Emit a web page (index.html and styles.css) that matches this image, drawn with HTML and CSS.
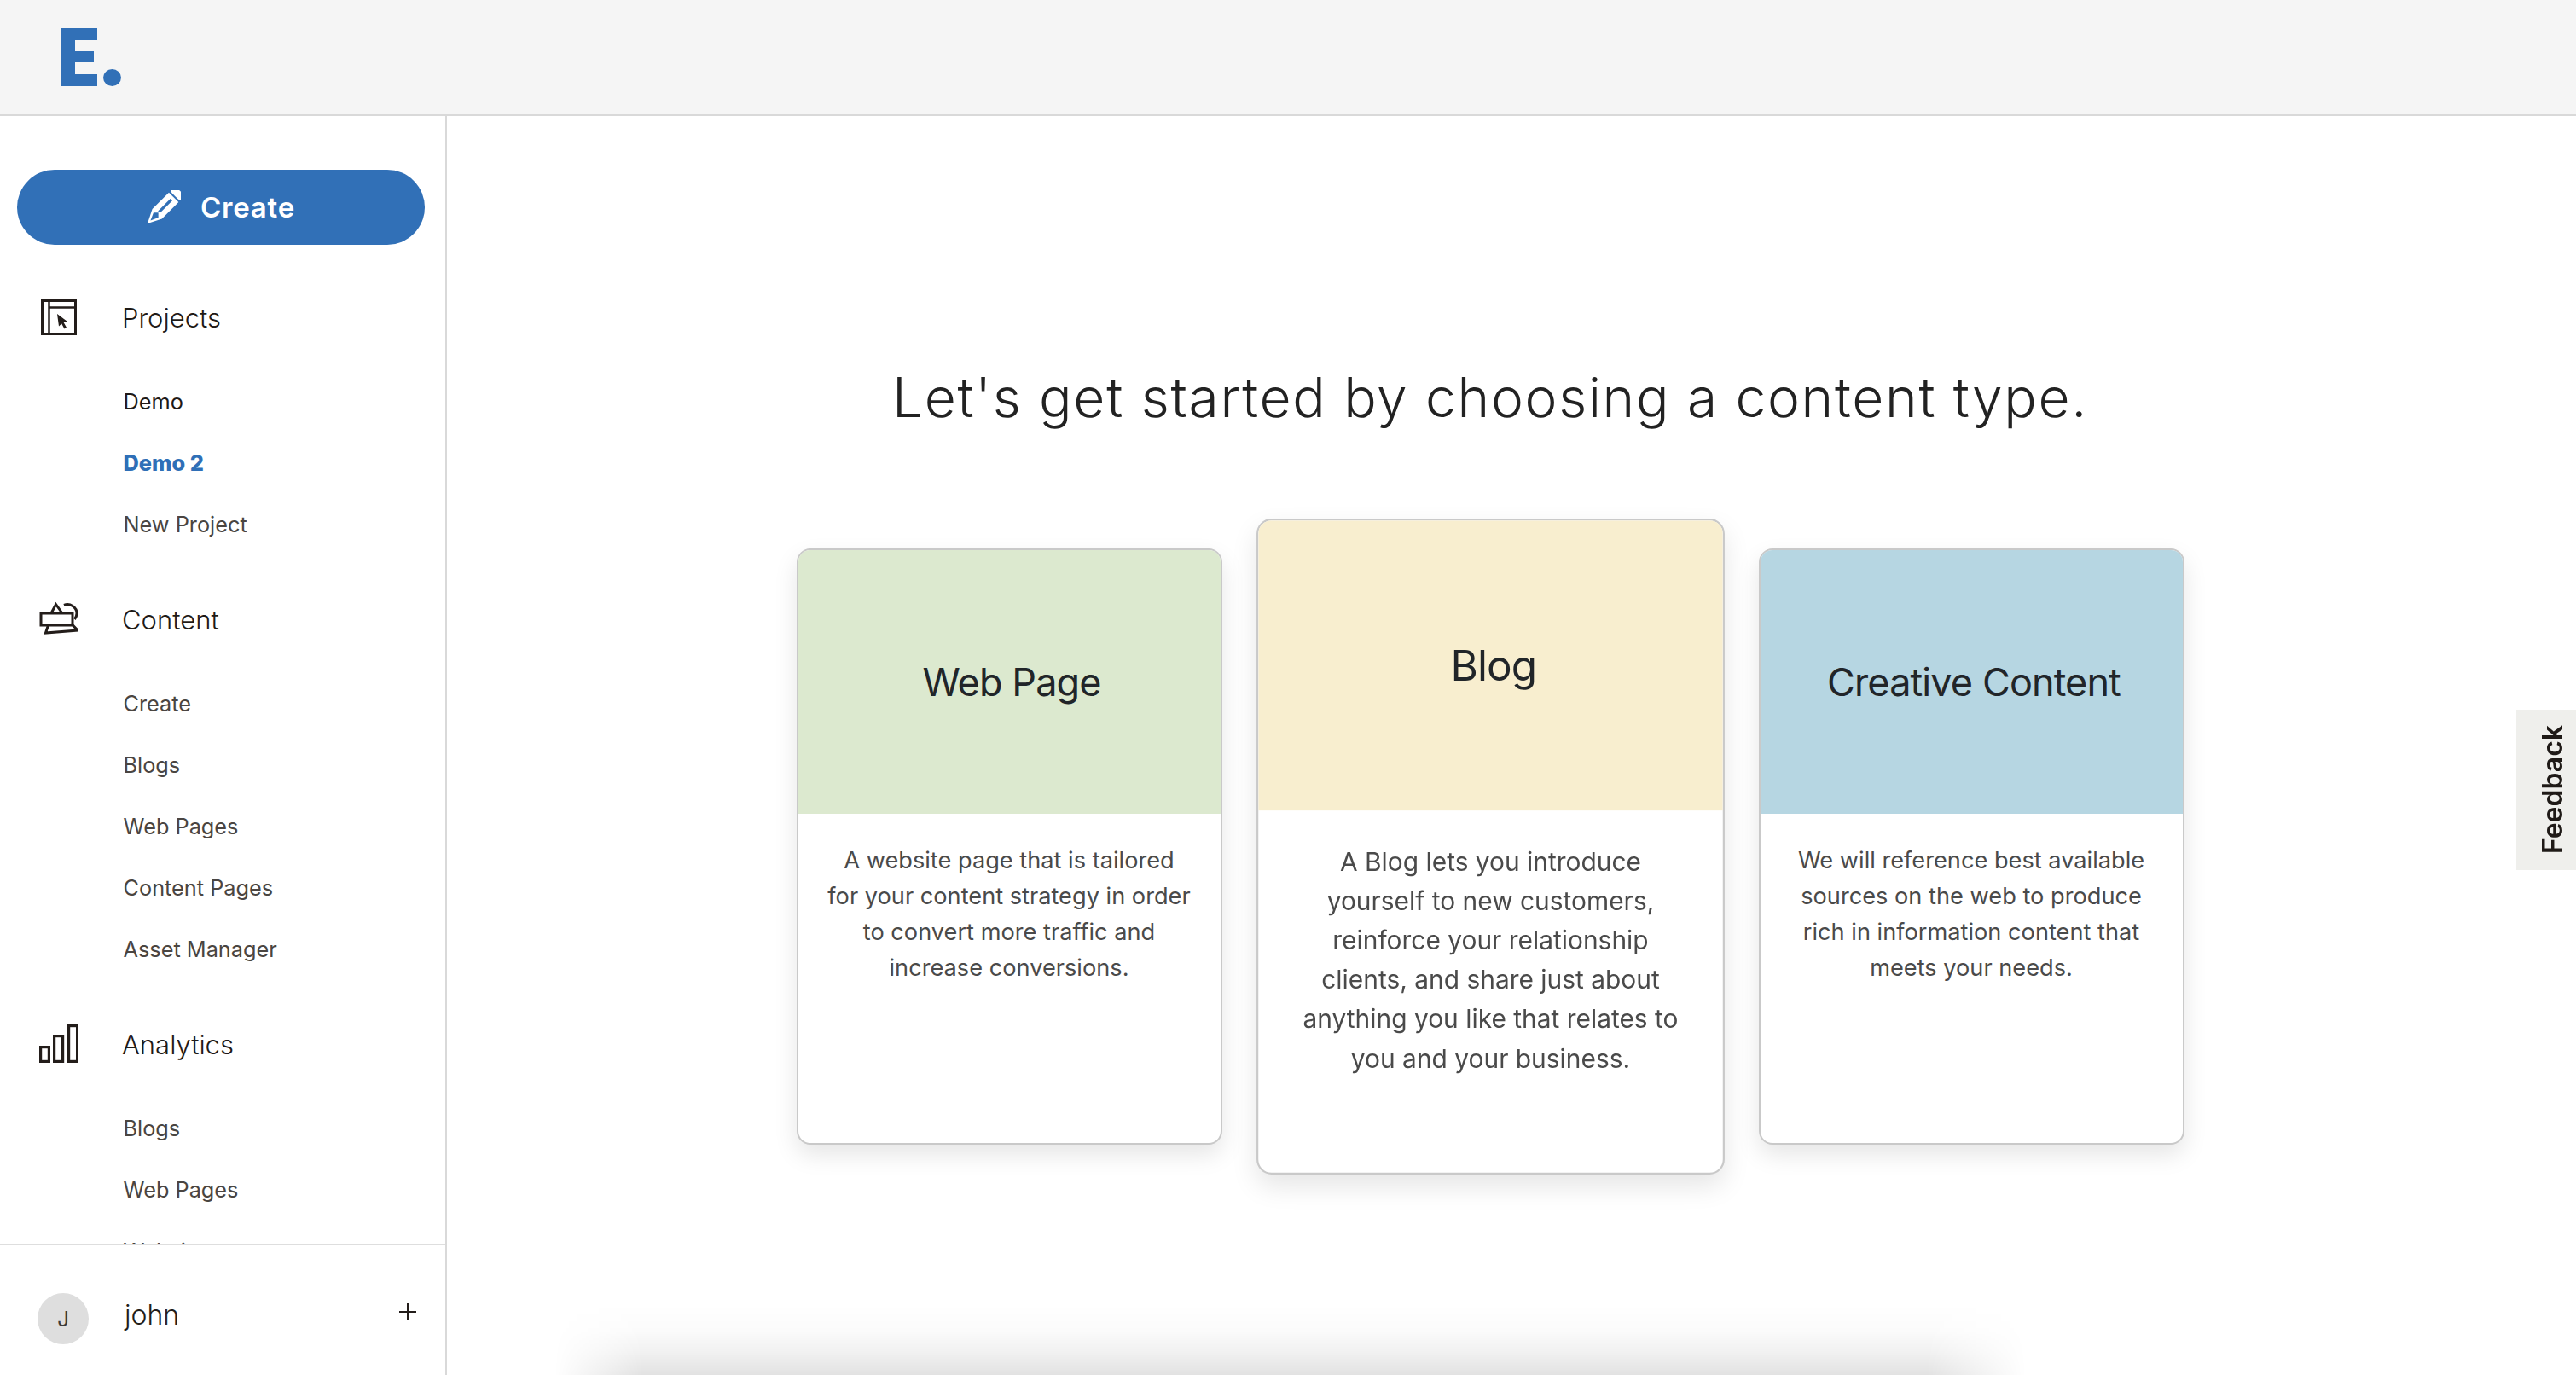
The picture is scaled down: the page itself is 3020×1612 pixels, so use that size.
FILE: index.html
```html
<!DOCTYPE html>
<html>
<head>
  <title>Choose a content type</title>
  <link rel="stylesheet" href="styles.css">
</head>
<body>
  <header class="topbar">
    <div class="logo"><span class="logo-e"></span><span class="logo-dot"></span></div>
  </header>
  <div class="layout">
    <aside class="sidebar">
      <nav class="side-nav">
        <a class="create-btn" href="#">
          <svg class="pencil" viewBox="0 0 40 40" width="40" height="40">
            <g transform="translate(20 20) rotate(45)" fill="#fff">
              <rect x="-8" y="-27" width="16" height="8.5" rx="3.5"/>
              <path d="M-8 -16.5H8V11L0 27L-8 11Z"/>
              <path d="M-1.6 -12.5H1.6V8H-1.6Z" fill="#3170b7"/>
              <path d="M-4 13L0 9L4 13L0 22Z" fill="#3170b7"/>
            </g>
          </svg>
          <span>Create</span>
        </a>

        <div class="nav-head">
          <svg class="nav-icon" viewBox="0 0 46 46" width="46" height="46" fill="none" stroke="#231d1a">
            <rect x="3.5" y="3.5" width="39" height="39" stroke-width="3"/>
            <path d="M11.5 3.5V42.5M11.5 11.5H42.5" stroke-width="2.5"/>
            <path d="M21 19L33 28L28.6 29L32 35L29.5 36.5L26.2 30.5L23 33.5Z" fill="#231d1a" stroke="none"/>
          </svg>
          <span>Projects</span>
        </div>
        <ul class="sub-list">
          <li class="dark"><a href="#">Demo</a></li>
          <li class="active"><a href="#">Demo 2</a></li>
          <li><a href="#">New Project</a></li>
        </ul>

        <div class="nav-head">
          <svg class="nav-icon" viewBox="0 0 46 46" width="46" height="46" fill="none" stroke="#231d1a" stroke-width="3">
            <path d="M14 16L19.5 5.5L27 16"/>
            <path d="M29 6.5C36 3.5 44 9 44 16C44 19 43 21 41.5 23"/>
            <rect x="2" y="16" width="37" height="14"/>
            <path d="M10.5 30L7.5 39L45 36L37.5 28"/>
          </svg>
          <span>Content</span>
        </div>
        <ul class="sub-list">
          <li><a href="#">Create</a></li>
          <li><a href="#">Blogs</a></li>
          <li><a href="#">Web Pages</a></li>
          <li><a href="#">Content Pages</a></li>
          <li><a href="#">Asset Manager</a></li>
        </ul>

        <div class="nav-head">
          <svg class="nav-icon" viewBox="0 0 46 46" width="46" height="46" fill="none" stroke="#231d1a" stroke-width="3.2">
            <rect x="1.6" y="26.6" width="9.8" height="16.8"/>
            <rect x="17.6" y="13.6" width="10" height="29.8"/>
            <rect x="34.6" y="1.6" width="10" height="41.8"/>
          </svg>
          <span>Analytics</span>
        </div>
        <ul class="sub-list">
          <li><a href="#">Blogs</a></li>
          <li><a href="#">Web Pages</a></li>
          <li><a href="#">Website</a></li>
        </ul>
      </nav>
      <div class="user-row">
        <div class="avatar">J</div>
        <div class="user-name">john</div>
        <svg class="plus" viewBox="0 0 20 20" width="20" height="20" stroke="#231d1a" stroke-width="2"><path d="M0 10H20M10 0V20"/></svg>
      </div>
    </aside>

    <main class="main">
      <h1 class="title">Let's get started by choosing a content type.</h1>
      <div class="cards">
        <a class="card" href="#">
          <div class="card-top green"><h2>Web Page</h2></div>
          <p>A website page that is tailored<br>for your content strategy in order<br>to convert more traffic and<br>increase conversions.</p>
        </a>
        <a class="card card-focus" href="#">
          <div class="card-top yellow"><h2>Blog</h2></div>
          <p>A Blog lets you introduce<br>yourself to new customers,<br>reinforce your relationship<br>clients, and share just about<br>anything you like that relates to<br>you and your business.</p>
        </a>
        <a class="card" href="#">
          <div class="card-top blue"><h2>Creative Content</h2></div>
          <p>We will reference best available<br>sources on the web to produce<br>rich in information content that<br>meets your needs.</p>
        </a>
      </div>
    </main>
  </div>

  <div class="bottom-shadow"></div>
  <a class="feedback" href="#"><span>Feedback</span></a>
</body>
</html>
```

FILE: styles.css
```css
* {
  box-sizing: border-box;
}

html, body {
  margin: 0;
  height: 100%;
  overflow: hidden;
}

body {
  font-family: Inter, "Liberation Sans", sans-serif;
  background: #fff;
  color: #231d1a;
}

a {
  color: inherit;
  text-decoration: none;
}

.topbar {
  height: 136px;
  background: #f5f5f5;
  border-bottom: 2px solid #d9d9d9;
  padding: 32px 0 0 71px;
}

.logo {
  display: flex;
  align-items: flex-end;
  height: 69px;
  gap: 7px;
}

.logo-e {
  width: 43px;
  height: 68px;
  background: linear-gradient(#3170b7, #3170b7) 0 0 / 100% 14px no-repeat,
    linear-gradient(#3170b7, #3170b7) 0 27px / 39px 13px no-repeat,
    linear-gradient(#3170b7, #3170b7) 0 100% / 100% 14px no-repeat,
    linear-gradient(#3170b7, #3170b7) 0 0 / 17px 100% no-repeat;
}

.logo-dot {
  width: 21px;
  height: 20px;
  border-radius: 50%;
  background: #3170b7;
}

.layout {
  display: flex;
  height: calc(100% - 136px);
}

.sidebar {
  width: 524px;
  flex: none;
  border-right: 2px solid #d9d9d9;
  display: flex;
  flex-direction: column;
}

.side-nav {
  flex: 1;
  min-height: 0;
  overflow: hidden;
  padding: 63px 24px 0 20px;
}

.create-btn {
  display: flex;
  align-items: center;
  justify-content: center;
  gap: 23px;
  height: 88px;
  border-radius: 44px;
  background: #3170b7;
  color: #fff;
  font-weight: 560;
  font-size: 33px;
  letter-spacing: 0.8px;
  margin-bottom: 49px;
}

.pencil {
  display: block;
}

.nav-head {
  display: flex;
  align-items: center;
  height: 72px;
  padding-left: 26px;
  gap: 51px;
  font-size: 31px;
  font-weight: 300;
  color: #1f1a17;
}

.nav-icon {
  flex: none;
}

.sub-list {
  list-style: none;
  margin: 26.5px 0 39.5px;
  padding: 0 0 0 124.5px;
  font-size: 25.3px;
  color: #4a4541;
}

.sub-list li {
  height: 72px;
  line-height: 72px;
}

.sub-list .dark {
  color: #1f1a17;
}

.sub-list .active {
  color: #2f6fb7;
  font-weight: 800;
}

.user-row {
  height: 154px;
  flex: none;
  border-top: 2px solid #dedede;
  display: flex;
  align-items: center;
  padding: 20px 34px 0 44px;
}

.avatar {
  width: 60px;
  height: 60px;
  border-radius: 50%;
  background: #dedede;
  display: flex;
  align-items: center;
  justify-content: center;
  font-size: 24px;
  color: #3a3a3a;
}

.user-name {
  flex: 1;
  margin: -10px 0 0 42px;
  font-size: 32px;
  font-weight: 300;
}

.plus {
  margin-top: -16px;
}

.main {
  flex: 1;
  min-width: 0;
  padding: 285px 50px 0 0;
  display: flex;
  flex-direction: column;
  align-items: center;
}

.title {
  margin: 0;
  font-weight: 300;
  font-size: 64px;
  letter-spacing: 1.7px;
  line-height: 90px;
  color: #222;
  white-space: nowrap;
}

.cards {
  display: flex;
  gap: 65px;
  margin-top: 132px;
}

.card {
  display: block;
  width: 499px;
  height: 699px;
  background: #fff;
  border: 2px solid #c9c9c9;
  border-radius: 16px;
  overflow: hidden;
  box-shadow: 0 12px 28px rgba(0, 0, 0, 0.1);
}

.card-focus {
  transform: scale(1.1);
}

.card-top {
  height: 309px;
  display: flex;
  align-items: center;
  justify-content: center;
  padding: 0 0 0 6px;
}

.card-top h2 {
  margin: 0;
  font-size: 45px;
  font-weight: 400;
  letter-spacing: -0.9px;
  color: #212529;
}

.green { background: #dce9cf; }
.yellow { background: #f8eecf; }
.blue { background: #b6d6e2; }

.card p {
  margin: 34px 0 0;
  padding: 0 10px;
  text-align: center;
  font-size: 27.2px;
  line-height: 42px;
  color: #4a4a4a;
}

.feedback {
  position: absolute;
  right: 0;
  top: 832px;
  width: 70px;
  height: 188px;
  padding-left: 14px;
  background: #efefec;
  display: flex;
  align-items: center;
  justify-content: center;
}

.feedback span {
  writing-mode: vertical-rl;
  transform: rotate(180deg);
  font-weight: 560;
  font-size: 32px;
  color: #1f1a17;
}

.bottom-shadow {
  position: absolute;
  left: 650px;
  top: 1530px;
  width: 1725px;
  height: 82px;
  pointer-events: none;
  background: linear-gradient(rgba(0, 0, 0, 0), rgba(0, 0, 0, 0.015) 37%, rgba(0, 0, 0, 0.055) 67%, rgba(0, 0, 0, 0.115));
  -webkit-mask-image: linear-gradient(to right, transparent, #000 6%, #000 93.3%, transparent);
  mask-image: linear-gradient(to right, transparent, #000 6%, #000 93.3%, transparent);
}
```
